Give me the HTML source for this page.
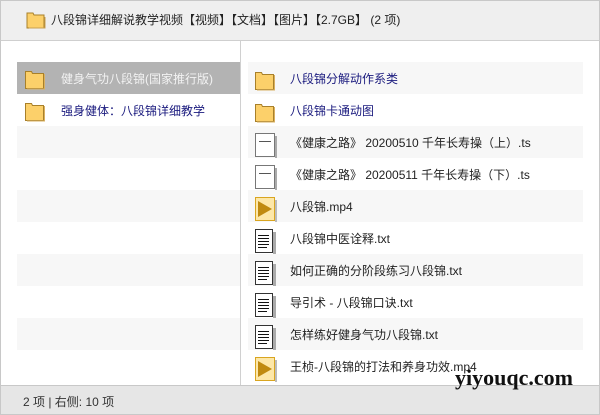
<!DOCTYPE html>
<html><head><meta charset="utf-8"><style>
*{margin:0;padding:0;box-sizing:border-box}
body{width:600px;height:415px;overflow:hidden;background:#fff;font-family:"Liberation Sans","Noto Sans CJK SC",sans-serif;font-size:12px;position:relative}
.frame{position:absolute;left:0;top:0;width:600px;height:415px;border:1px solid #c8c8c8}
.hdr{position:absolute;left:0;top:0;width:600px;height:41px;background:#efefef;border:1px solid #c8c8c8;border-bottom:1px solid #cfcfcf}
.hdr span{position:absolute;left:50px;top:10px;color:#222}
.div{position:absolute;left:240px;top:41px;width:1px;height:344px;background:#d0d0d0}
.row{position:absolute;height:32px;line-height:34px}
.sh{background:#f7f7f7}
.sel{background:#b3b3b3;color:#f4f4f4}
.blue{color:#1a1a7e}
.blk{color:#222}
.ftr{position:absolute;left:0;top:385px;width:600px;height:30px;background:#e6e6e6;border:1px solid #c8c8c8}
.ftr span{position:absolute;left:22px;top:7px;color:#333}
.wm{position:absolute;left:455px;top:365px;font-family:"Liberation Serif",serif;font-weight:bold;font-size:22px;color:#111}
</style></head><body>
<div class="frame"></div>
<div class="hdr">
<svg style="position:absolute;left:25px;top:11px" width="20" height="17"><path d="M1 1h6l1 2h10v13H1z" fill="#fcd06a" stroke="#a8802a"/><path d="M3 16h16V5" fill="none" stroke="#c9a050" stroke-width="1"/></svg>
<span>八段锦详细解说教学视频【视频】【文档】【图片】【2.7GB】 (2 项)</span></div>
<div class="div"></div>

<div class="row sel" style="left:17px;top:62px;width:223px"></div>
<div class="row sh" style="left:17px;top:126px;width:223px"></div>
<div class="row sh" style="left:17px;top:190px;width:223px"></div>
<div class="row sh" style="left:17px;top:254px;width:223px"></div>
<div class="row sh" style="left:17px;top:318px;width:223px"></div>

<svg width="0" height="0" style="position:absolute"><defs>
<g id="f"><path d="M0.5 1.5h6l1 2h11v15H0.5z" fill="#fcd06a" stroke="#a8802a"/><path d="M19.5 4v15H2" fill="none" stroke="#d9b060"/></g>
<g id="d"><rect x="0.5" y="0.5" width="19" height="23" fill="#fff" stroke="#777"/><rect x="20" y="3" width="2" height="22" fill="#aaa"/><path d="M4 8.5h12" stroke="#555"/></g>
<g id="x" shape-rendering="crispEdges"><rect x="0.5" y="0.5" width="17" height="23" fill="#fff" stroke="#333"/><rect x="18" y="3" width="3" height="22" fill="#aaa"/><path d="M3 6.5h11M3 9.5h11M3 12.5h11M3 15.5h11M3 18.5h9" stroke="#111" stroke-width="1"/></g>
<g id="v"><rect x="0.5" y="0.5" width="19" height="23" fill="#fde7a8" stroke="#d9a520"/><rect x="20" y="3" width="2" height="22" fill="#bbb"/><path d="M3 4l14 8-14 8z" fill="#c08a10"/></g>
</defs></svg>

<svg style="position:absolute;left:25px;top:70px" width="22" height="22"><use href="#f"/></svg>
<div class="row" style="left:61px;top:62px;color:#f2f2f2">健身气功八段锦(国家推行版)</div>
<svg style="position:absolute;left:25px;top:102px" width="22" height="22"><use href="#f"/></svg>
<div class="row blue" style="left:61px;top:94px">强身健体：八段锦详细教学</div>

<div class="row sh" style="left:248px;top:62px;width:335px"></div>
<div class="row sh" style="left:248px;top:126px;width:335px"></div>
<div class="row sh" style="left:248px;top:190px;width:335px"></div>
<div class="row sh" style="left:248px;top:254px;width:335px"></div>
<div class="row sh" style="left:248px;top:318px;width:335px"></div>

<svg style="position:absolute;left:255px;top:71px" width="22" height="22"><use href="#f"/></svg>
<div class="row blue" style="left:290px;top:62px">八段锦分解动作系类</div>
<svg style="position:absolute;left:255px;top:103px" width="22" height="22"><use href="#f"/></svg>
<div class="row blue" style="left:290px;top:94px">八段锦卡通动图</div>

<svg style="position:absolute;left:255px;top:133px" width="24" height="26"><use href="#d"/></svg>
<div class="row blk" style="left:290px;top:126px">《健康之路》 20200510 千年长寿操（上）.ts</div>
<svg style="position:absolute;left:255px;top:165px" width="24" height="26"><use href="#d"/></svg>
<div class="row blk" style="left:290px;top:158px">《健康之路》 20200511 千年长寿操（下）.ts</div>
<svg style="position:absolute;left:255px;top:197px" width="24" height="26"><use href="#v"/></svg>
<div class="row blk" style="left:290px;top:190px">八段锦.mp4</div>
<svg style="position:absolute;left:255px;top:229px" width="24" height="26"><use href="#x"/></svg>
<div class="row blk" style="left:290px;top:222px">八段锦中医诠释.txt</div>
<svg style="position:absolute;left:255px;top:261px" width="24" height="26"><use href="#x"/></svg>
<div class="row blk" style="left:290px;top:254px">如何正确的分阶段练习八段锦.txt</div>
<svg style="position:absolute;left:255px;top:293px" width="24" height="26"><use href="#x"/></svg>
<div class="row blk" style="left:290px;top:286px">导引术 - 八段锦口诀.txt</div>
<svg style="position:absolute;left:255px;top:325px" width="24" height="26"><use href="#x"/></svg>
<div class="row blk" style="left:290px;top:318px">怎样练好健身气功八段锦.txt</div>
<svg style="position:absolute;left:255px;top:357px" width="24" height="26"><use href="#v"/></svg>
<div class="row blk" style="left:290px;top:350px">王桢-八段锦的打法和养身功效.mp4</div>

<div class="ftr"><span>2 项 | 右侧: 10 项</span></div>
<div class="wm">yiyouqc.com</div>
</body></html>
